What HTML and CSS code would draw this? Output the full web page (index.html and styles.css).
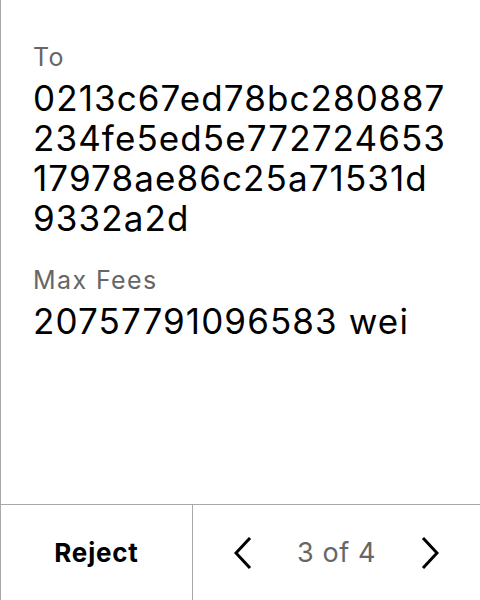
FILE: index.html
```html
<!DOCTYPE html>
<html>
<head>
<meta charset="utf-8">
<link rel="stylesheet" href="styles.css">
</head>
<body>
<div class="screen">
  <main class="content">
    <div class="field">
      <div class="label">To</div>
      <div class="value">0213c67ed78bc280887234fe5ed5e77272465317978ae86c25a71531d9332a2d</div>
    </div>
    <div class="field">
      <div class="label">Max Fees</div>
      <div class="value">20757791096583 wei</div>
    </div>
  </main>
  <footer class="footer">
    <div class="reject">Reject</div>
    <div class="pager">
      <svg class="chev" width="18" height="32" viewBox="0 0 18 32"><path d="M16 1 L2 16 L16 31" fill="none" stroke="#000" stroke-width="3"/></svg>
      <span class="count">3 of 4</span>
      <svg class="chev" width="18" height="32" viewBox="0 0 18 32"><path d="M2 1 L16 16 L2 31" fill="none" stroke="#000" stroke-width="3"/></svg>
    </div>
  </footer>
</div>
</body>
</html>
```
FILE: styles.css
```css
html, body {
  margin: 0;
  padding: 0;
  background: #fff;
}
.screen {
  width: 480px;
  height: 600px;
  box-sizing: border-box;
  border-left: 1px solid #a8a8a8;
  display: flex;
  flex-direction: column;
  font-family: Inter, "Noto Sans", sans-serif;
  color: #000;
}
.content {
  flex: 1;
  padding: 41px 20px 0 32px;
}
.field {
  margin-bottom: 26px;
}
.label {
  font-size: 25px;
  line-height: 32px;
  letter-spacing: 1.4px;
  color: #666;
}
.value {
  margin-top: 5px;
  font-size: 35px;
  line-height: 40px;
  letter-spacing: 1.1px;
  word-break: break-all;
  max-width: 414px;
}
.footer {
  height: 95px;
  border-top: 1px solid #a8a8a8;
  display: flex;
}
.reject {
  width: 191px;
  border-right: 1px solid #a8a8a8;
  display: flex;
  align-items: center;
  justify-content: center;
  font-size: 26px;
  font-weight: 700;
  letter-spacing: 0.8px;
}
.pager {
  flex: 1;
  display: flex;
  align-items: center;
  justify-content: center;
  gap: 45px;
}
.count {
  font-size: 27px;
  letter-spacing: 0.6px;
  color: #666;
}
.chev {
  display: block;
}
```
